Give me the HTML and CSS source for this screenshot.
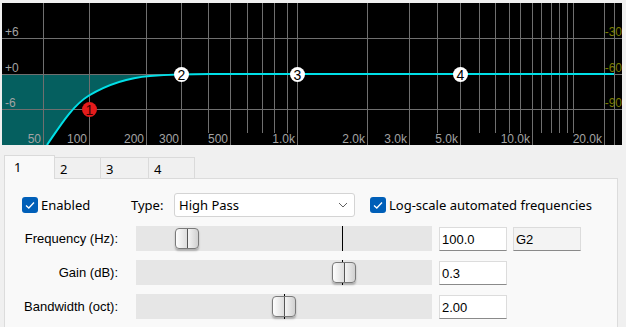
FILE: index.html
```html
<!DOCTYPE html>
<html lang="en">
<head>
    <meta charset="UTF-8">
    <title>EQ Band</title>
    <link rel="stylesheet" href="styles.css">
</head>
<body>
    <div class="graph">
        <svg width="620" height="142" viewBox="2 3 620 142">
            <rect x="2" y="3" width="620" height="142" fill="#000"/>
            <path class="cut" d="M2 74 L210 74 C190 74 170 74.5 150 76 C125 78 105 86 89 95.5 C72 106 60 126 47 145 L2 145 Z"/>
            <g class="grid">
                <line x1="2" y1="38.5" x2="622" y2="38.5"/>
                <line x1="2" y1="74.5" x2="622" y2="74.5"/>
                <line x1="2" y1="109.5" x2="622" y2="109.5"/>
                <!-- labelled decades -->
                <line x1="43.5" y1="3" x2="43.5" y2="145"/>
                <line x1="89.5" y1="3" x2="89.5" y2="145"/>
                <line x1="146.5" y1="3" x2="146.5" y2="145"/>
                <line x1="181.5" y1="3" x2="181.5" y2="145"/>
                <line x1="230.5" y1="3" x2="230.5" y2="145"/>
                <line x1="297.5" y1="3" x2="297.5" y2="145"/>
                <line x1="367.5" y1="3" x2="367.5" y2="145"/>
                <line x1="409.5" y1="3" x2="409.5" y2="145"/>
                <line x1="460.5" y1="3" x2="460.5" y2="145"/>
                <line x1="532.5" y1="3" x2="532.5" y2="145"/>
                <line x1="604.5" y1="3" x2="604.5" y2="145"/>
                <line x1="614.5" y1="3" x2="614.5" y2="145"/>
                <!-- minor lines -->
                <line x1="208.5" y1="3" x2="208.5" y2="133"/>
                <line x1="247.5" y1="3" x2="247.5" y2="133"/>
                <line x1="262.5" y1="3" x2="262.5" y2="133"/>
                <line x1="274.5" y1="3" x2="274.5" y2="133"/>
                <line x1="287.5" y1="3" x2="287.5" y2="133"/>
                <line x1="437.5" y1="3" x2="437.5" y2="133"/>
                <line x1="479.5" y1="3" x2="479.5" y2="133"/>
                <line x1="495.5" y1="3" x2="495.5" y2="133"/>
                <line x1="509.5" y1="3" x2="509.5" y2="133"/>
                <line x1="520.5" y1="3" x2="520.5" y2="133"/>
                <line x1="541.5" y1="3" x2="541.5" y2="133"/>
                <line x1="551.5" y1="3" x2="551.5" y2="133"/>
                <line x1="559.5" y1="3" x2="559.5" y2="133"/>
                <line x1="567.5" y1="3" x2="567.5" y2="133"/>
                <line x1="573.5" y1="3" x2="573.5" y2="133"/>
            </g>
            <path class="curve" d="M47 145 C60 126 72 106 89 95.5 C105 86 125 78 150 76 C170 74.5 190 74 210 74 L614 74"/>
            <g class="db">
                <text x="5" y="36">+6</text>
                <text x="5" y="72">+0</text>
                <text x="5" y="107">-6</text>
            </g>
            <g class="level">
                <text x="622" y="36">-30</text>
                <text x="622" y="72">-60</text>
                <text x="622" y="107">-90</text>
            </g>
            <g class="freq">
                <text x="41" y="143">50</text>
                <text x="87" y="143">100</text>
                <text x="144" y="143">200</text>
                <text x="179" y="143">300</text>
                <text x="228" y="143">500</text>
                <text x="295" y="143">1.0k</text>
                <text x="365" y="143">2.0k</text>
                <text x="407" y="143">3.0k</text>
                <text x="458" y="143">5.0k</text>
                <text x="530" y="143">10.0k</text>
                <text x="602" y="143">20.0k</text>
            </g>
            <g class="node active">
                <circle cx="89.5" cy="109.5" r="7.5"/>
                <text x="89.5" y="114.5">1</text>
            </g>
            <g class="node">
                <circle cx="181.5" cy="74.5" r="7.5"/>
                <text x="181.5" y="79.5">2</text>
            </g>
            <g class="node">
                <circle cx="297.5" cy="74.5" r="7.5"/>
                <text x="297.5" y="79.5">3</text>
            </g>
            <g class="node">
                <circle cx="460.5" cy="74.5" r="7.5"/>
                <text x="460.5" y="79.5">4</text>
            </g>
        </svg>
    </div>

    <div class="tabs">
        <div class="tab active">1</div>
        <div class="tab">2</div>
        <div class="tab wide">3</div>
        <div class="tab">4</div>
    </div>

    <div class="panel">
        <div class="row top-row">
            <label class="check first">
                <span class="box"><svg width="16" height="16" viewBox="0 0 16 16"><polyline points="4,8.5 6.8,11 12,5.5"/></svg></span>
                Enabled
            </label>
            <span class="type-label">Type:</span>
            <div class="select">
                <span>High Pass</span>
                <svg width="10" height="6" viewBox="0 0 10 6"><polyline points="1,1 5,5 9,1"/></svg>
            </div>
            <label class="check">
                <span class="box"><svg width="16" height="16" viewBox="0 0 16 16"><polyline points="4,8.5 6.8,11 12,5.5"/></svg></span>
                Log-scale automated frequencies
            </label>
        </div>

        <div class="row slider-row">
            <span class="label">Frequency (Hz):</span>
            <div class="track">
                <span class="marker" style="left: 206px"></span>
                <span class="thumb" style="left: 39px"></span>
            </div>
            <div class="field">100.0</div>
            <div class="field note">G2</div>
        </div>

        <div class="row slider-row">
            <span class="label">Gain (dB):</span>
            <div class="track">
                <span class="marker" style="left: 206px"></span>
                <span class="thumb" style="left: 196px"></span>
            </div>
            <div class="field">0.3</div>
        </div>

        <div class="row slider-row">
            <span class="label">Bandwidth (oct):</span>
            <div class="track">
                <span class="marker" style="left: 148px"></span>
                <span class="thumb" style="left: 136px"></span>
            </div>
            <div class="field">2.00</div>
        </div>
    </div>
</body>
</html>
```

FILE: styles.css
```css
body {
    margin: 0;
    background: #f0f0f0;
    font-family: "Segoe UI", "Noto Sans", sans-serif;
    font-size: 13px;
    color: #000;
    overflow: hidden;
}

/* response graph */
.graph {
    margin: 3px 0 0 2px;
    width: 620px;
    height: 142px;
}
.graph svg {
    display: block;
}
.cut {
    fill: #055f5f;
}
.grid line {
    stroke: #6f6f6f;
    stroke-width: 1;
}
.curve {
    fill: none;
    stroke: #00e0e8;
    stroke-width: 2;
}
.graph text {
    font-family: "Liberation Sans", Arial, sans-serif;
    font-size: 12px;
}
.db text,
.freq text {
    fill: #a3a3a3;
}
.freq text {
    text-anchor: end;
}
.level text {
    fill: #7c7c00;
    text-anchor: end;
}
.node circle {
    fill: #fff;
}
.graph .node text {
    fill: #000;
    font-size: 14px;
    text-anchor: middle;
}
.node.active circle {
    fill: #e41b1b;
}
.graph .node.active text {
    fill: #3a0000;
}

/* tabs */
.tabs {
    display: flex;
    align-items: flex-end;
    height: 24px;
    margin: 10px 0 -1px 4px;
    position: relative;
    z-index: 1;
}
.tab {
    box-sizing: border-box;
    width: 46px;
    height: 22px;
    padding: 3px 0 0 5px;
    border: 1px solid #dadada;
    border-left: none;
    background: #f0f0f0;
    line-height: 16px;
}
.tab.wide {
    width: 48px;
}
.tab.active {
    width: 51px;
    height: 24px;
    padding: 3px 0 0 9px;
    border-left: 1px solid #dadada;
    border-bottom: none;
    background: #f9f9f9;
}

/* band panel */
.panel {
    box-sizing: border-box;
    margin-left: 4px;
    width: 614px;
    height: 149px;
    padding: 14px 0 0 17px;
    border: 1px solid #dcdcdc;
    border-bottom: none;
    background: #f9f9f9;
}
.row {
    display: flex;
    align-items: center;
}
.top-row {
    height: 24px;
}
.check {
    display: flex;
    align-items: center;
    gap: 3px;
}
.check.first {
    width: 109px;
}
.box {
    width: 16px;
    height: 16px;
    border-radius: 3px;
    background: #005fb8;
}
.box svg {
    display: block;
}
.box polyline {
    fill: none;
    stroke: #fff;
    stroke-width: 1.3;
}
.type-label {
    width: 43px;
}
.select {
    box-sizing: border-box;
    display: flex;
    align-items: center;
    justify-content: space-between;
    width: 181px;
    height: 24px;
    padding: 0 6px 0 4px;
    margin-right: 15px;
    background: #fff;
    border: 1px solid #d4d4d4;
    border-radius: 3px;
}
.select polyline {
    fill: none;
    stroke: #606060;
    stroke-width: 1;
}

.slider-row {
    height: 25px;
    margin-top: 9px;
    font-family: "Liberation Sans", Arial, sans-serif;
}
.label {
    width: 96px;
    margin-right: 18px;
    text-align: right;
}
.track {
    position: relative;
    width: 296px;
    height: 25px;
    margin-right: 7px;
    background: #e6e6e6;
}
.marker {
    position: absolute;
    top: 0;
    bottom: 0;
    width: 1px;
    background: #000;
}
.thumb {
    position: absolute;
    top: 2px;
    box-sizing: border-box;
    width: 24px;
    height: 21px;
    border: 1px solid #7a7a7a;
    border-radius: 4px;
    background: linear-gradient(to right, #fdfdfd 0%, #dedede 48%, #555 48%, #555 54%, #f4f4f4 54%, #d0d0d0 100%);
    box-shadow: 0 2px 2px rgba(0, 0, 0, 0.25);
}
.field {
    box-sizing: border-box;
    width: 68px;
    height: 24px;
    margin-right: 6px;
    padding: 3px 2px 0;
    background: #fff;
    border: 1px solid #dcdcdc;
    border-bottom-color: #8a8a8a;
    line-height: 17px;
}
.field.note {
    background: #f3f3f3;
}
```
